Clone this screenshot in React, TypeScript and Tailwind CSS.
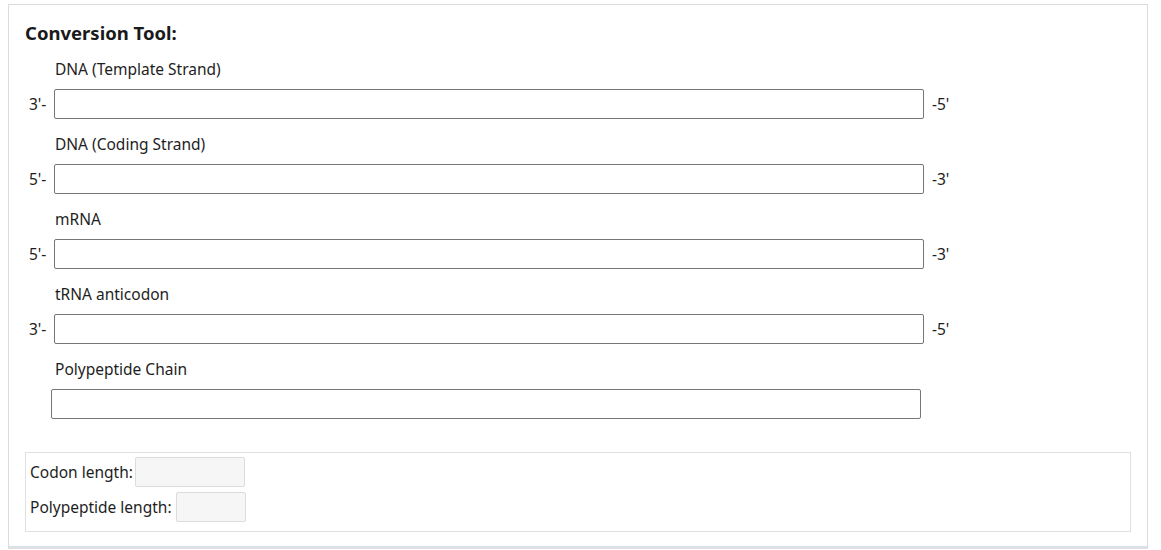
import React from "react";

const rows: { label: string; left: string; right: string }[] = [
  { label: "DNA (Template Strand)", left: "3'-", right: "-5'" },
  { label: "DNA (Coding Strand)", left: "5'-", right: "-3'" },
  { label: "mRNA", left: "5'-", right: "-3'" },
  { label: "tRNA anticodon", left: "3'-", right: "-5'" },
];

export default function App() {
  return (
    <div
      className="min-h-[550px] bg-white pt-[4px] pl-[8px] text-[#1e1e1e]"
      style={{ fontFamily: '"Noto Sans", "Open Sans", sans-serif' }}
    >
      <div className="w-[1140px] h-[545px] border border-[#dcdcdc] border-b-[3px] border-b-[#dde1e6] px-4 pt-[16px]">
        <h2 className="text-[18.5px] leading-[24px] font-bold text-[#1a1a1a]">Conversion Tool:</h2>
        <div className="mt-[14px]">
          {rows.map((r) => (
            <div key={r.label} className="mb-[15px]">
              <div className="pl-[30px] text-[15.5px] leading-[20px]">{r.label}</div>
              <div className="mt-[10px] flex items-center">
                <span className="w-[29px] pl-[4px] text-[15.5px] leading-[20px]">{r.left}</span>
                <input className="w-[870px] h-[30px] border border-[#767676] rounded-[2px] bg-white outline-none" />
                <span className="ml-[8px] text-[15.5px] leading-[20px]">{r.right}</span>
              </div>
            </div>
          ))}
          <div>
            <div className="pl-[30px] text-[15.5px] leading-[20px]">Polypeptide Chain</div>
            <div className="mt-[10px] flex items-center">
              <input className="ml-[26px] w-[870px] h-[30px] border border-[#767676] rounded-[2px] bg-white outline-none" />
            </div>
          </div>
        </div>
        <div className="mt-[33px] border border-[#e0e0e0] h-[80px] pl-[4px] pt-[4px]">
          <div className="flex items-center h-[30px]">
            <span className="text-[15.5px] leading-[20px]">Codon length:</span>
            <input className="ml-[2px] w-[110px] h-[30px] border border-[#dcdcdc] rounded-[2px] bg-[#f6f6f6] outline-none" />
          </div>
          <div className="mt-[5px] flex items-center h-[30px]">
            <span className="text-[15.5px] leading-[20px]">Polypeptide length:</span>
            <input className="ml-[4px] w-[70px] h-[30px] border border-[#dcdcdc] rounded-[2px] bg-[#f6f6f6] outline-none" />
          </div>
        </div>
      </div>
    </div>
  );
}
